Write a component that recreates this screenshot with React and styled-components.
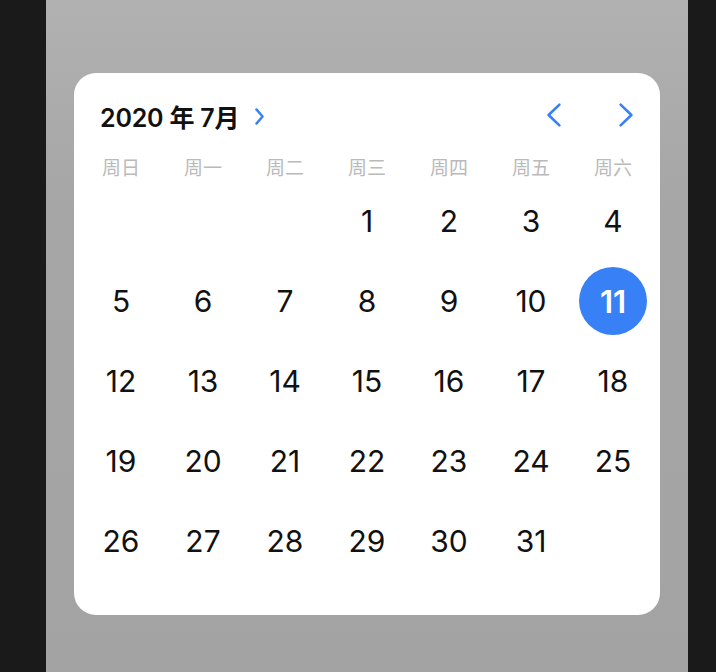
import React from 'react';
import styled, { createGlobalStyle } from 'styled-components';

const GlobalStyle = createGlobalStyle`
  html, body {
    margin: 0;
    padding: 0;
    background: #1a1a1a;
  }
  body {
    font-family: Inter, "Noto Sans CJK SC", sans-serif;
  }
`;

const Screen = styled.div`
  display: flex;
  width: 716px;
  height: 672px;
  overflow: hidden;
`;

const SideStrip = styled.div`
  width: ${(p) => p.$width}px;
  flex-shrink: 0;
  background: #1a1a1a;
`;

const Backdrop = styled.div`
  flex: 1;
  padding: 73px 28px 0;
  background: linear-gradient(180deg, #b1b1b2 0%, #a6a6a6 30%, #a3a3a3 100%);
`;

const Card = styled.div`
  height: 542px;
  box-sizing: border-box;
  background: #fff;
  border-radius: 22px;
  padding: 24px 6px 0;
`;

const Header = styled.div`
  display: flex;
  align-items: center;
  height: 36px;
  padding: 0 16px 0 20px;
`;

const Title = styled.div`
  display: flex;
  align-items: center;
  gap: 15px;
  font-size: 25px;
  font-weight: 600;
  color: #111;
  letter-spacing: -0.2px;
  margin-top: 2px;
`;

const Spacer = styled.div`
  flex: 1;
`;

const NavButton = styled.button`
  display: flex;
  align-items: center;
  justify-content: center;
  width: 24px;
  height: 30px;
  padding: 0;
  margin-left: ${(p) => p.$gap || 0}px;
  border: none;
  background: none;
  cursor: pointer;
`;

const Grid = styled.div`
  display: grid;
  grid-template-columns: repeat(7, 82px);
`;

const WeekRow = styled(Grid)`
  margin-top: 18px;
  height: 30px;
  align-items: center;
`;

const WeekLabel = styled.div`
  text-align: center;
  font-size: 19px;
  color: #bababa;
`;

const DayCell = styled.div`
  height: 80px;
  display: flex;
  align-items: center;
  justify-content: center;
`;

const DayNumber = styled.div`
  width: 68px;
  height: 68px;
  border-radius: 50%;
  display: flex;
  align-items: center;
  justify-content: center;
  font-size: ${(p) => (p.$selected ? 31 : 30)}px;
  font-weight: ${(p) => (p.$selected ? 600 : 400)};
  color: ${(p) => (p.$selected ? '#fff' : '#111')};
  background: ${(p) => (p.$selected ? '#3880f6' : 'transparent')};
`;

const Chevron = ({ dir = 'right', w = 16, h = 26, stroke = 2.6 }) => (
  <svg width={w} height={h} viewBox={`0 0 ${w} ${h}`} fill="none">
    <path
      d={
        dir === 'right'
          ? `M${stroke} ${stroke} L${w - stroke} ${h / 2} L${stroke} ${h - stroke}`
          : `M${w - stroke} ${stroke} L${stroke} ${h / 2} L${w - stroke} ${h - stroke}`
      }
      stroke="#3880f6"
      strokeWidth={stroke}
      strokeLinecap="round"
      strokeLinejoin="round"
    />
  </svg>
);

const weekdays = ['周日', '周一', '周二', '周三', '周四', '周五', '周六'];
const leading = 3;
const daysInMonth = 31;
const selectedDay = 11;

export default function App() {
  const cells = [];
  for (let i = 0; i < leading; i++) cells.push(null);
  for (let d = 1; d <= daysInMonth; d++) cells.push(d);

  return (
    <>
      <GlobalStyle />
      <Screen>
        <SideStrip $width={46} />
        <Backdrop>
          <Card>
            <Header>
              <Title>
                <span>2020 年 7月</span>
                <Chevron dir="right" w={11} h={19} stroke={2.4} />
              </Title>
              <Spacer />
              <NavButton>
                <Chevron dir="left" />
              </NavButton>
              <NavButton $gap={48}>
                <Chevron dir="right" />
              </NavButton>
            </Header>
            <WeekRow>
              {weekdays.map((w) => (
                <WeekLabel key={w}>{w}</WeekLabel>
              ))}
            </WeekRow>
            <Grid>
              {cells.map((d, i) => (
                <DayCell key={i}>
                  {d && <DayNumber $selected={d === selectedDay}>{d}</DayNumber>}
                </DayCell>
              ))}
            </Grid>
          </Card>
        </Backdrop>
        <SideStrip $width={28} />
      </Screen>
    </>
  );
}
